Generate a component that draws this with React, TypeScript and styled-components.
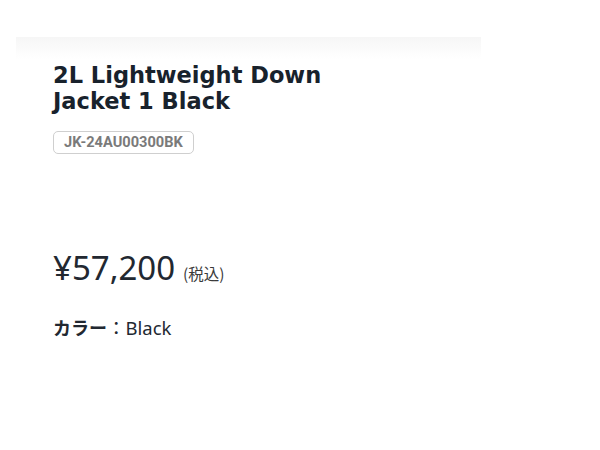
import React from "react";
import styled, { createGlobalStyle } from "styled-components";

const GlobalStyle = createGlobalStyle`
  html, body {
    margin: 0;
    padding: 0;
    background: #ffffff;
  }
  body {
    font-family: "Noto Sans", "Noto Sans CJK JP", sans-serif;
    color: #1f2328;
  }
`;

const Page = styled.div`
  width: 600px;
  height: 450px;
  padding: 37px 0 0 16px;
  box-sizing: border-box;
`;

const Panel = styled.div`
  width: 465px;
  background: linear-gradient(to bottom, #f6f6f6 0px, #ffffff 22px);
  padding: 25px 37px 0;
  box-sizing: border-box;
`;

const Title = styled.h1`
  margin: 0;
  font-family: "DejaVu Sans", sans-serif;
  font-weight: 700;
  font-size: 22.5px;
  line-height: 26px;
  color: #18222c;
  max-width: 300px;
`;

const CodeBadge = styled.span`
  display: inline-block;
  margin-top: 17px;
  padding: 0 10px;
  height: 23px;
  line-height: 21px;
  box-sizing: border-box;
  border: 1px solid #cfcfcf;
  border-radius: 5px;
  font-family: Roboto, sans-serif;
  font-weight: 700;
  font-size: 14.6px;
  color: #7a7a7a;
`;

const PriceRow = styled.div`
  display: flex;
  align-items: baseline;
  gap: 8px;
  margin-top: 95px;
`;

const Price = styled.span`
  font-family: "Noto Sans", sans-serif;
  font-size: 33px;
  line-height: 38px;
  color: #222831;
`;

const TaxNote = styled.span`
  font-family: "Noto Sans CJK JP", sans-serif;
  font-size: 15.5px;
  color: #3a3a3a;
`;

const SpecRow = styled.div`
  margin-top: 27px;
  line-height: 26px;
  color: #222831;
`;

const SpecLabel = styled.span`
  font-family: "Noto Sans CJK JP", sans-serif;
  font-weight: 700;
  font-size: 18px;
`;

const SpecValue = styled.span`
  font-family: "Noto Sans", "Noto Sans CJK JP", sans-serif;
  font-size: 18.5px;
`;

export default function App() {
  return (
    <Page>
      <GlobalStyle />
      <Panel>
        <Title>2L Lightweight Down Jacket 1 Black</Title>
        <CodeBadge>JK-24AU00300BK</CodeBadge>
        <PriceRow>
          <Price>¥57,200</Price>
          <TaxNote>(税込)</TaxNote>
        </PriceRow>
        <SpecRow>
          <SpecLabel>カラー</SpecLabel>
          <SpecValue>：Black</SpecValue>
        </SpecRow>
      </Panel>
    </Page>
  );
}
